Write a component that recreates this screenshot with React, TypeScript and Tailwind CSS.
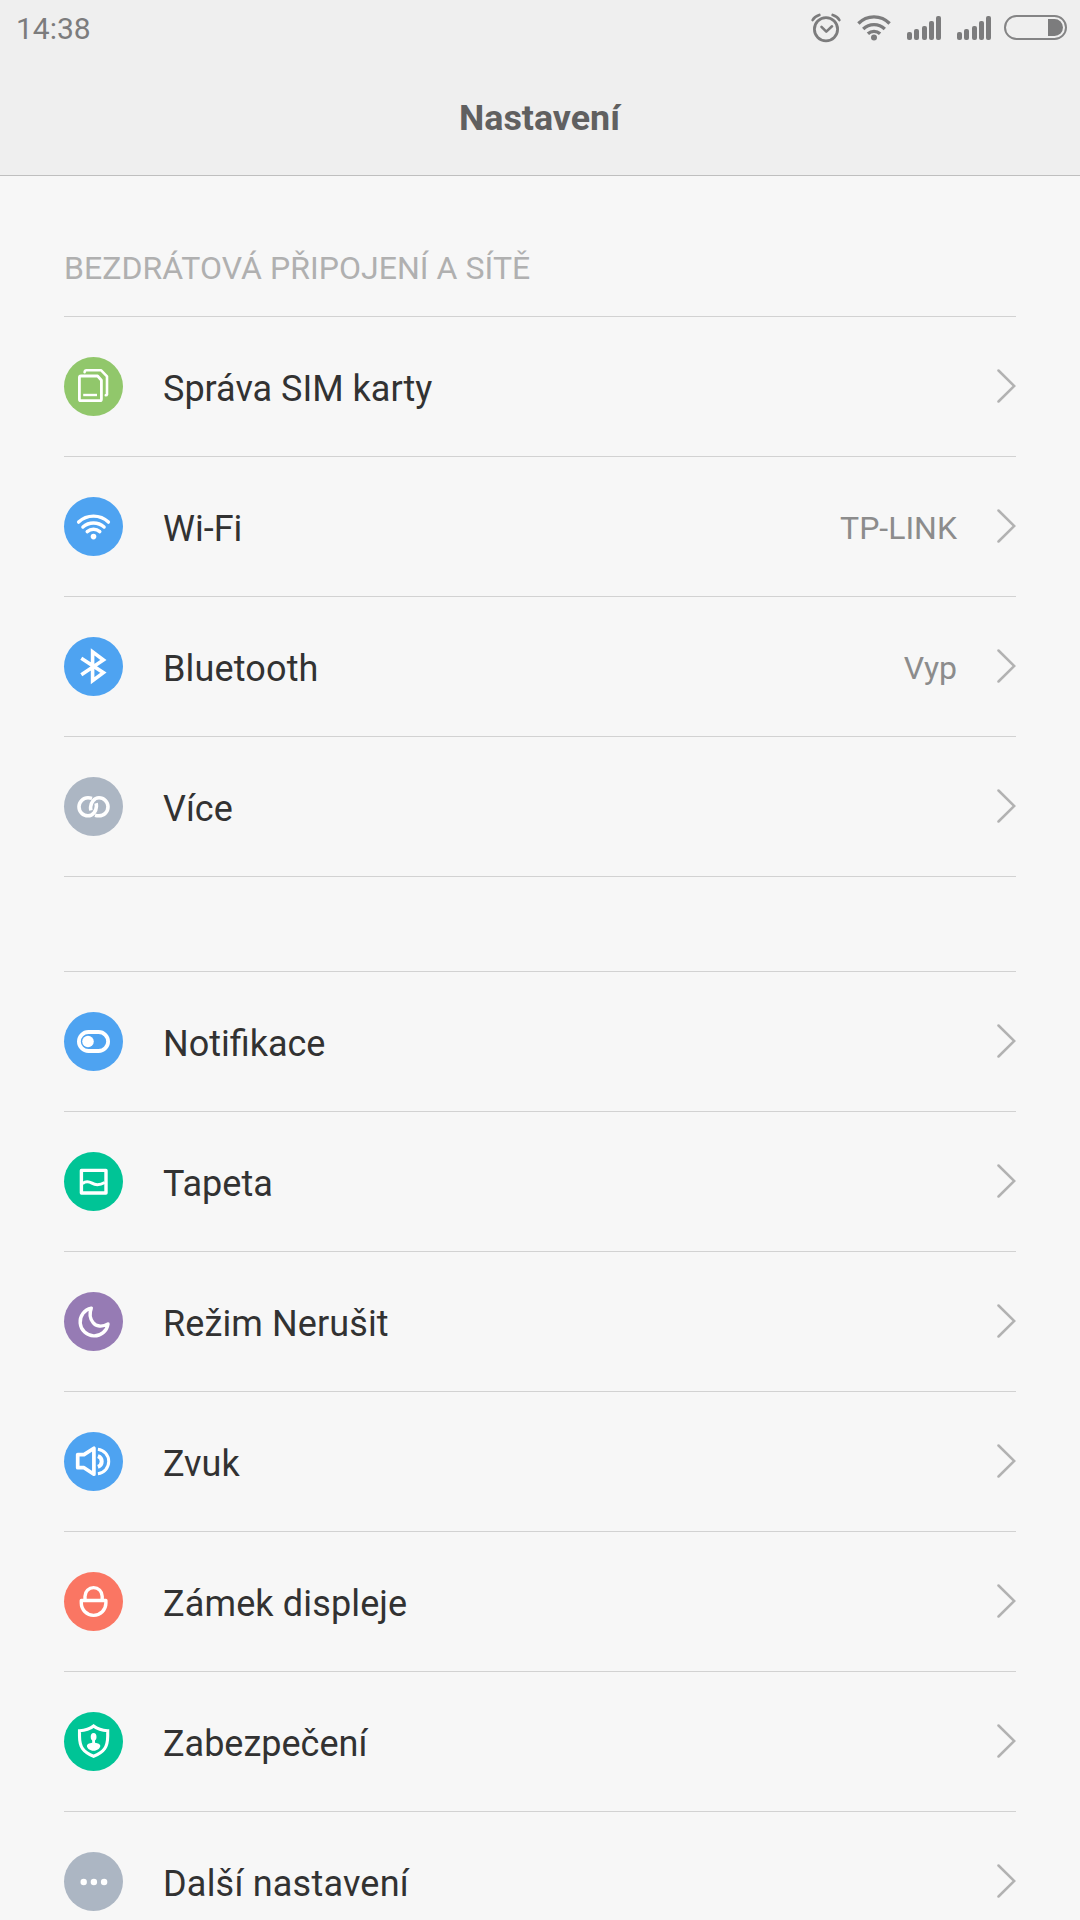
import React from "react";

type IconProps = { children: React.ReactNode; color: string };

function Badge({ children, color }: IconProps) {
  return (
    <span className={`flex size-[59px] shrink-0 rounded-full ${color}`}>
      <svg
        className="size-full"
        viewBox="0 0 59 59"
        fill="none"
        stroke="#fff"
        strokeWidth="3.4"
        strokeLinecap="round"
        strokeLinejoin="round"
      >
        {children}
      </svg>
    </span>
  );
}

const SimIcon = () => (
  <Badge color="bg-[#91c76b]">
    <g strokeWidth="2.8">
      <path d="M17 19H33.6L37.4 23.2V42.2Q37.4 43.7 35.9 43.7H16.9Q15.4 43.7 15.4 42.2V20.5Q15.4 19 17 19Z" />
      <path d="M20.6 15.2Q20.8 13.3 22.4 13.3H37.2L43 19.3V37.4Q42.8 38.3 41.8 38.3" strokeWidth="2.6" />
      <path d="M20.4 38H31.8" strokeLinecap="square" strokeWidth="2.4" />
    </g>
  </Badge>
);

const WifiIcon = () => (
  <Badge color="bg-[#4ea3f1]">
    <path d="M14.6 25.1A21.5 21.5 0 0 1 44.4 25.1" />
    <path d="M18.9 30A16 16 0 0 1 40.1 30" />
    <path d="M23.2 34.6A9.6 9.6 0 0 1 35.8 34.6" />
    <circle cx="29.5" cy="39.6" r="2.8" fill="#fff" stroke="none" />
  </Badge>
);

const BluetoothIcon = () => (
  <Badge color="bg-[#4ea3f1]">
    <path
      d="M18.8 22.3L39.4 35.7L28.6 43.6V14.9L39.4 23L18.8 36.8"
      strokeLinejoin="miter"
      strokeWidth="3.6"
      strokeLinecap="square"
    />
  </Badge>
);

const MoreNetworksIcon = () => (
  <Badge color="bg-[#acb6c3]">
    <g strokeWidth="3.6" strokeLinecap="butt">
      <path d="M28 21.4Q26 20.8 24 20.8A9 9 0 0 0 24 38.8C29 38.8 32.2 33.8 32.4 29.6Q32.500 27.800 32.100 26.200" />
      <path d="M31 38.2Q33 38.8 35 38.8A9 9 0 0 0 35 20.8C30 20.8 26.800 25.800 26.600 30Q26.500 31.800 26.900 33.400" />
    </g>
  </Badge>
);

const NotificationsIcon = () => (
  <Badge color="bg-[#4ea3f1]">
    <rect x="14.9" y="20" width="29.2" height="19" rx="9.5" strokeWidth="3.8" />
    <circle cx="24" cy="29.5" r="5.8" fill="#fff" stroke="none" />
  </Badge>
);

const WallpaperIcon = () => (
  <Badge color="bg-[#00c496]">
    <rect x="17.4" y="18.4" width="24.6" height="22.6" />
    <path d="M18.6 31.4C22 28.8 25 29.4 28 31.2S34.5 34 40.8 30.5" strokeWidth="3.1" strokeLinecap="butt" />
  </Badge>
);

const MoonIcon = () => (
  <Badge color="bg-[#967bb4]">
    <path d="M27.3 16.2A14 14 0 1 0 44 31.9C38 35.5 32 34.5 29 30.5C26 26.8 25.5 21 27.3 16.2Z" />
  </Badge>
);

const SoundIcon = () => (
  <Badge color="bg-[#4ea3f1]">
    <g strokeLinecap="butt" strokeLinejoin="miter">
      <path d="M29.9 16.3V42.2L20 35.7H13.7V22.6H20Z" strokeWidth="3.7" strokeLinejoin="round" />
      <path d="M33.9 17.2A12.4 12.4 0 0 1 33.9 41.8" strokeWidth="3" />
      <path d="M33.9 24.2A5.6 5.6 0 0 1 33.9 34.8" strokeWidth="4" />
    </g>
  </Badge>
);

const LockIcon = () => (
  <Badge color="bg-[#fa7663]">
    <path d="M17.3 28.5H41.9V31.1A12.3 12.3 0 0 1 17.3 31.1Z" />
    <path d="M21 28V24.2A8.6 8.6 0 0 1 38.2 24.2V28" />
  </Badge>
);

const ShieldIcon = () => (
  <Badge color="bg-[#00c496]">
    <path
      d="M29.6 14C26 17 21 18.5 15.5 18.7V24C15.5 35 19 40 29.6 44.3C40.2 40 43.7 35 43.7 24V18.7C38.2 18.5 33.2 17 29.6 14Z"
      strokeWidth="3.1"
      strokeLinejoin="miter"
    />
    <g fill="#fff" stroke="none">
      <ellipse cx="29.6" cy="24.8" rx="2.9" ry="3.9" />
      <path d="M28.2 26H31V30.8C34 31.2 36.3 32.2 36.3 33.8C36.3 36.2 33.2 38.8 29.6 38.8S22.9 36.2 22.9 33.8C22.9 32.2 25.2 31.2 28.2 30.8Z" />
    </g>
  </Badge>
);

const DotsIcon = () => (
  <Badge color="bg-[#acb6c3]">
    <g fill="#fff" stroke="none">
      <circle cx="19.7" cy="30" r="3.2" />
      <circle cx="29.9" cy="30" r="3.2" />
      <circle cx="40.1" cy="30" r="3.2" />
    </g>
  </Badge>
);

function SignalBars() {
  return (
    <div className="flex h-6 w-[34px] items-end justify-between">
      <i className="h-[7.5px] w-[5px] rounded-[2px] bg-[#7c7c7d]" />
      <i className="h-[10.5px] w-[5px] rounded-[2px] bg-[#7c7c7d]" />
      <i className="h-3.5 w-[5px] rounded-[2px] bg-[#7c7c7d]" />
      <i className="h-[19px] w-[5px] rounded-[2px] bg-[#7c7c7d]" />
      <i className="h-6 w-[5px] rounded-[2px] bg-[#7c7c7d]" />
    </div>
  );
}

function StatusBar() {
  return (
    <div className="flex h-[55px] items-center justify-between pr-[13px] pl-4">
      <time className="pt-[2px] text-[30px] leading-none text-[#7c7c7d]">14:38</time>
      <div className="flex items-center">
        <svg
          className="mr-4 h-[30px] w-[30px]"
          viewBox="0 0 30 30"
          fill="none"
          stroke="#7c7c7d"
          strokeWidth="2.8"
          strokeLinecap="round"
          strokeLinejoin="round"
        >
          <circle cx="15" cy="16.3" r="11.6" />
          <path d="M10.5 13.8L15.3 18.6L21 13.3" strokeWidth="2.6" />
          <path d="M1.7 7Q3.5 3.3 8.3 2M28.3 7Q26.5 3.3 21.7 2" strokeWidth="2.7" />
        </svg>
        <svg className="mr-4 h-[28px] w-[34px]" viewBox="0 0 34 28" fill="none" stroke="#7c7c7d" strokeWidth="3.3">
          <path d="M1.4 9.5A21.5 21.5 0 0 1 32.6 9.5" />
          <path d="M6.2 15A15.5 15.5 0 0 1 27.8 15" />
          <path d="M10.9 19.8A9 9 0 0 1 23.1 19.8" />
          <circle cx="17" cy="23.4" r="3" fill="#7c7c7d" stroke="none" />
        </svg>
        <SignalBars />
        <span className="w-4" />
        <SignalBars />
        <div className="ml-[13px] flex h-[25px] w-[63px] items-center justify-end rounded-full border-2 border-[#848485] pr-[2px]">
          <span className="h-[17px] w-[15px] rounded-r-full bg-[#7c7c7d]" />
        </div>
      </div>
    </div>
  );
}

type Item = { label: string; icon: React.ReactNode; value?: string; tracking?: string };

function Row({ label, icon, value, tracking = "" }: Item) {
  return (
    <li className="flex h-[140px] items-center border-b border-[#d2d2d2]">
      {icon}
      <span className={`ml-10 flex-1 pt-[5px] text-[36px] leading-[48px] text-[#323232] ${tracking}`}>{label}</span>
      {value && <span className="pt-[2px] text-[32px] leading-[44px] text-[#8c8c8c]">{value}</span>}
      <svg
        className="ml-10 h-[35px] w-[19px]"
        viewBox="0 0 19 35"
        fill="none"
        stroke="#b2b2b2"
        strokeWidth="2.5"
        strokeLinecap="round"
      >
        <path d="M1.5 1.5L17.3 17L1.5 32.5" />
      </svg>
    </li>
  );
}

const wireless: Item[] = [
  { label: "Správa SIM karty", icon: <SimIcon /> },
  { label: "Wi-Fi", icon: <WifiIcon />, value: "TP-LINK" },
  { label: "Bluetooth", icon: <BluetoothIcon />, value: "Vyp", tracking: "tracking-[0.15px]" },
  { label: "Více", icon: <MoreNetworksIcon /> },
];

const device: Item[] = [
  { label: "Notifikace", icon: <NotificationsIcon /> },
  { label: "Tapeta", icon: <WallpaperIcon /> },
  { label: "Režim Nerušit", icon: <MoonIcon />, tracking: "tracking-[0.1px]" },
  { label: "Zvuk", icon: <SoundIcon /> },
  { label: "Zámek displeje", icon: <LockIcon />, tracking: "tracking-[0.14px]" },
  { label: "Zabezpečení", icon: <ShieldIcon /> },
  { label: "Další nastavení", icon: <DotsIcon />, tracking: "tracking-[0.22px]" },
];

function Group({ items }: { items: Item[] }) {
  return (
    <ul className="border-t border-[#d2d2d2]">
      {items.map((item) => (
        <Row key={item.label} {...item} />
      ))}
    </ul>
  );
}

export default function App() {
  return (
    <div className="h-[1920px] w-[1080px] overflow-hidden bg-[#f7f7f7] font-[Roboto,sans-serif]">
      <header className="h-44 border-b border-[#bfbfbf] bg-[#efefef]">
        <StatusBar />
        <h1 className="pt-[38px] pr-px text-center text-[35.8px] leading-[50px] font-bold text-[#606060]">
          Nastavení
        </h1>
      </header>
      <main className="px-16">
        <h2 className="h-[140px] pt-[70px] text-[32px] leading-[44px] tracking-[0.06px] whitespace-nowrap text-[#b0b0b0]">
          BEZDRÁTOVÁ PŘIPOJENÍ A SÍTĚ
        </h2>
        <Group items={wireless} />
        <div className="h-[94px]" />
        <Group items={device} />
      </main>
    </div>
  );
}
